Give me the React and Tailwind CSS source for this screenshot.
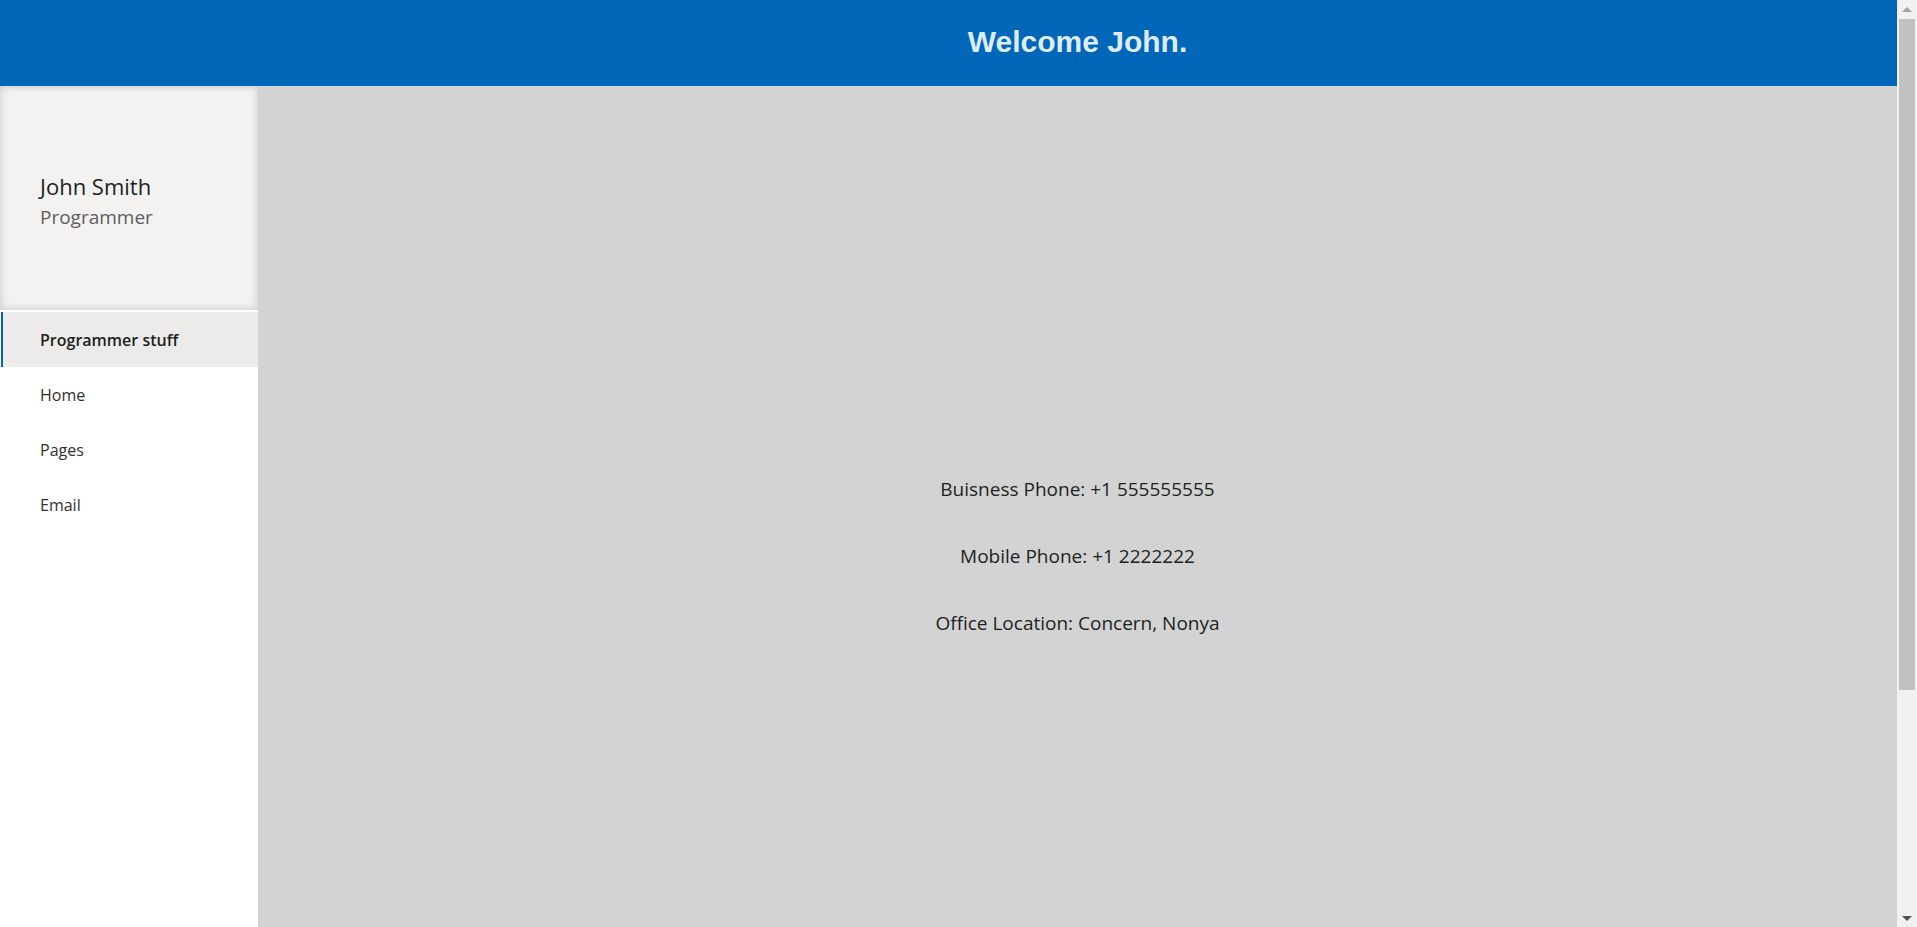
import React from "react";

const Scrollbar = () => (
  <div className="w-[20px] shrink-0 bg-[#f1f1f1] flex flex-col items-center">
    <div className="h-[19px] w-full flex items-center justify-center pt-px">
      <svg width="10" height="6" viewBox="0 0 10 6">
        <path d="M5 0 L10 5 L0 5 Z" fill="#a3a3a3" />
      </svg>
    </div>
    <div className="w-[16px] h-[671px] bg-[#c1c1c1]" />
    <div className="flex-1" />
    <div className="h-[17px] w-full flex items-center justify-center">
      <svg width="10" height="6" viewBox="0 0 10 6">
        <path d="M0 0 L10 0 L5 5 Z" fill="#505050" />
      </svg>
    </div>
  </div>
);

const Dashboard = () => {
  const navItems = [
    { id: 1, label: "Programmer stuff", active: true },
    { id: 2, label: "Home" },
    { id: 3, label: "Pages" },
    { id: 4, label: "Email" },
  ];

  const details = [
    "Buisness Phone: +1 555555555",
    "Mobile Phone: +1 2222222",
    "Office Location: Concern, Nonya",
  ];

  return (
    <div className="h-[927px] overflow-hidden flex font-['Open_Sans',sans-serif] text-[#201f1e]">
      <div className="flex-1 min-w-0 flex flex-col">
        {/* Header */}
        <header className="h-[86px] shrink-0 bg-[#0066b8] flex items-center">
          <div className="w-[258px] shrink-0" />
          <h1 className="flex-1 text-center font-['Liberation_Sans',Arial,sans-serif] font-bold text-[30px] text-[#deecf9] pb-[4px]">
            Welcome John.
          </h1>
        </header>

        <div className="flex flex-1">
          {/* Sidebar */}
          <aside className="w-[258px] shrink-0 bg-white">
            <div className="h-[224px] bg-[#f3f2f1] shadow-[inset_0_0_8px_rgba(0,0,0,0.18)] flex flex-col justify-center pl-10 pt-[5px]">
              <div className="text-[22px] leading-[30px] text-[#201f1e]">John Smith</div>
              <div className="mt-[3px] text-[19px] leading-[26px] text-[#605e5c]">Programmer</div>
            </div>

            <nav className="mt-[2px]">
              {navItems.map((item) =>
                item.active ? (
                  <div
                    key={item.id}
                    className="h-[55px] ml-px border-l-2 border-[#0066b8] bg-[#edebe9] flex items-center pl-[37px] text-[16px] font-semibold text-[#201f1e]"
                  >
                    {item.label}
                  </div>
                ) : (
                  <div
                    key={item.id}
                    className="h-[55px] flex items-center pl-10 text-[16px] text-[#323130]"
                  >
                    {item.label}
                  </div>
                )
              )}
            </nav>
          </aside>

          {/* Main */}
          <main className="flex-1 bg-[#d3d3d3]">
            <div className="pt-[390px] flex flex-col items-center gap-[40px]">
              {details.map((line) => (
                <p key={line} className="text-[19px] leading-[27px]">
                  {line}
                </p>
              ))}
            </div>
          </main>
        </div>
      </div>

      <Scrollbar />
    </div>
  );
};

export default Dashboard;
